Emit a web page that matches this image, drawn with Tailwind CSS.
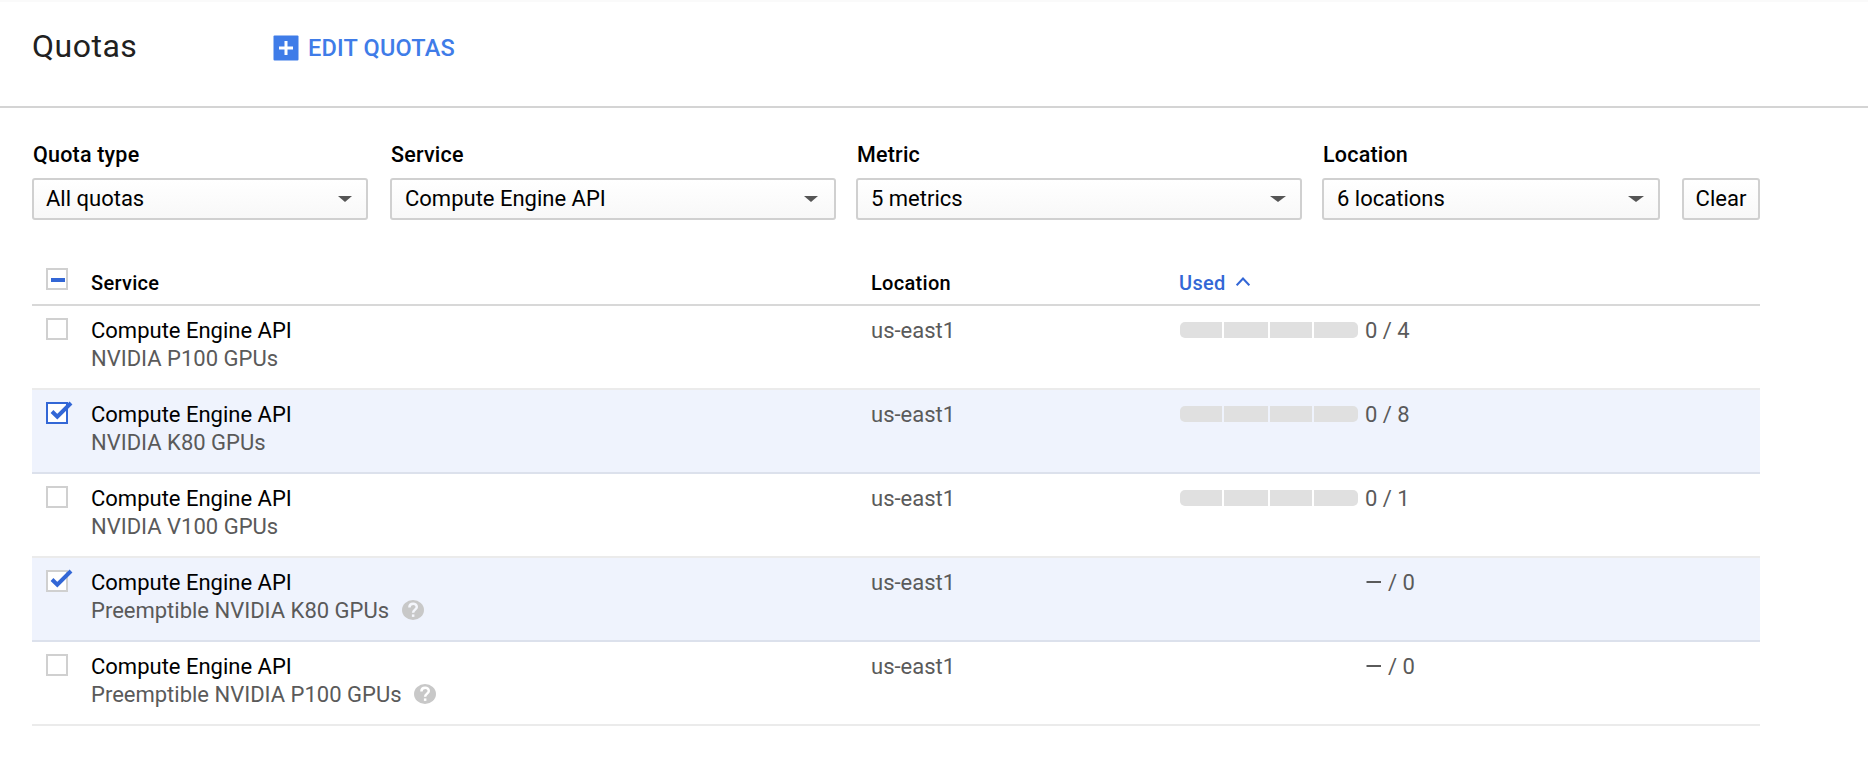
<!DOCTYPE html>
<html lang="en">
<head>
<meta charset="utf-8">
<title>Quotas</title>
<script src="https://cdn.jsdelivr.net/npm/@tailwindcss/browser@4"></script>
</head>
<body class="h-[758px] overflow-hidden bg-white font-[Roboto,sans-serif] text-[22px] leading-7 text-black">
<header class="flex h-[108px] items-start border-b-2 border-[#d4d4d4] pl-8 shadow-[inset_0_2px_0_#fafafa]">
  <h1 class="mt-[27px] w-[241px] text-[32px] leading-[38px] tracking-[0.5px] text-[#212121]">Quotas</h1>
  <button class="mt-[34px] flex items-center gap-[9px] text-[23.5px] font-medium leading-7 tracking-[0.2px] text-[#3f7ce8]">
    <svg class="size-[26px]" viewBox="0 0 26 26"><rect x=".5" y=".5" width="25" height="25" rx="1" fill="#3f7ce8"/><path d="M13 6v14M6 13h14" stroke="#fff" stroke-width="3"/></svg>
    <span>EDIT QUOTAS</span>
  </button>
</header>

<section class="flex items-end pl-8 pt-[33px]">
  <div class="mr-[22px] w-[336px]">
    <div class="mb-[9px] pl-px text-[21.5px] font-medium tracking-[0.2px]">Quota type</div>
    <div class="flex h-[42px] items-center justify-between rounded-[3px] border-2 border-[#d0d0d0] bg-linear-to-b from-white to-[#f8f8f8] pl-[12px] pr-[14px]"><span>All quotas</span><svg class="h-[6px] w-[14px]" viewBox="0 0 14 6"><path d="M0 0h14L7 6z" fill="#555"/></svg></div>
  </div>
  <div class="mr-[20px] w-[446px]">
    <div class="mb-[9px] pl-px text-[21.5px] font-medium tracking-[0.2px]">Service</div>
    <div class="flex h-[42px] items-center justify-between rounded-[3px] border-2 border-[#d0d0d0] bg-linear-to-b from-white to-[#f8f8f8] pl-[13px] pr-[16px]"><span>Compute Engine API</span><svg class="h-[6px] w-[14px]" viewBox="0 0 14 6"><path d="M0 0h14L7 6z" fill="#555"/></svg></div>
  </div>
  <div class="mr-[20px] w-[446px]">
    <div class="mb-[9px] pl-px text-[21.5px] font-medium tracking-[0.2px]">Metric</div>
    <div class="flex h-[42px] items-center justify-between rounded-[3px] border-2 border-[#d0d0d0] bg-linear-to-b from-white to-[#f8f8f8] pl-[13px] pr-[14px]"><span>5 metrics</span><svg class="h-[6px] w-[16px]" viewBox="0 0 16 6"><path d="M0 0h16L8 6z" fill="#555"/></svg></div>
  </div>
  <div class="mr-[22px] w-[338px]">
    <div class="mb-[9px] pl-px text-[21.5px] font-medium tracking-[0.2px]">Location</div>
    <div class="flex h-[42px] items-center justify-between rounded-[3px] border-2 border-[#d0d0d0] bg-linear-to-b from-white to-[#f8f8f8] pl-[13px] pr-[14px]"><span>6 locations</span><svg class="h-[6px] w-[16px]" viewBox="0 0 16 6"><path d="M0 0h16L8 6z" fill="#555"/></svg></div>
  </div>
  <button class="h-[42px] w-[78px] rounded-[3px] border-2 border-[#d0d0d0] bg-linear-to-b from-white to-[#f8f8f8] leading-7">Clear</button>
</section>

<main class="ml-8 mt-[34px] w-[1728px]">
  <div class="flex h-[52px] border-b-2 border-[#d8d8d8] pl-[14px] text-[20px] font-medium tracking-[0.3px]">
    <svg class="mr-[23px] mt-[14px] size-[22px]" viewBox="0 0 22 22"><rect x="1" y="1" width="20" height="20" fill="#fff" stroke="#d0d0d0" stroke-width="2"/><path d="M5 12h14" stroke="#3367d6" stroke-width="4"/></svg>
    <div class="mt-[15px] w-[780px]">Service</div>
    <div class="mt-[15px] w-[308px]">Location</div>
    <div class="mt-[15px] flex gap-[10px] text-[#3367d6]">Used<svg class="mt-[8px] h-[9px] w-[14px]" viewBox="0 0 14 9"><path d="M.7 8.3L7 1.5l6.3 6.8" fill="none" stroke="#3367d6" stroke-width="2"/></svg></div>
  </div>

  <div class="flex h-[84px] border-b-2 border-[#ebebeb] pl-[14px] text-[#5a5a5a]">
    <svg class="mr-[23px] mt-3 size-[22px]" viewBox="0 0 22 22"><rect x="1" y="1" width="20" height="20" fill="#fff" stroke="#d0d0d0" stroke-width="2"/></svg>
    <div class="mt-[11px] w-[780px]"><div class="text-black">Compute Engine API</div><div>NVIDIA P100 GPUs</div></div>
    <div class="mt-[11px] w-[309px]">us-east1</div>
    <div class="mr-[7px] mt-4 flex h-4 w-[178px] gap-[2px] overflow-hidden rounded-[5px]"><i class="w-[42px] bg-[#e0e0e0]"></i><i class="w-[44px] bg-[#e0e0e0]"></i><i class="w-[42px] bg-[#e0e0e0]"></i><i class="w-[44px] bg-[#e0e0e0]"></i></div>
    <div class="mt-[11px]">0 / 4</div>
  </div>

  <div class="flex h-[84px] border-b-2 border-[#dce1ec] bg-[#eff3fd] pl-[14px] text-[#5a5a5a]">
    <svg class="mr-[23px] mt-3 size-[22px] overflow-visible" viewBox="0 0 22 22"><rect x="1" y="1" width="20" height="20" fill="#fff" stroke="#3367d6" stroke-width="2"/><path d="M6 9.500l5.300 5.200L25 1" fill="none" stroke="#3367d6" stroke-width="4"/></svg>
    <div class="mt-[11px] w-[780px]"><div class="text-black">Compute Engine API</div><div>NVIDIA K80 GPUs</div></div>
    <div class="mt-[11px] w-[309px]">us-east1</div>
    <div class="mr-[7px] mt-4 flex h-4 w-[178px] gap-[2px] overflow-hidden rounded-[5px]"><i class="w-[42px] bg-[#e0e0e0]"></i><i class="w-[44px] bg-[#e0e0e0]"></i><i class="w-[42px] bg-[#e0e0e0]"></i><i class="w-[44px] bg-[#e0e0e0]"></i></div>
    <div class="mt-[11px]">0 / 8</div>
  </div>

  <div class="flex h-[84px] border-b-2 border-[#ebebeb] pl-[14px] text-[#5a5a5a]">
    <svg class="mr-[23px] mt-3 size-[22px]" viewBox="0 0 22 22"><rect x="1" y="1" width="20" height="20" fill="#fff" stroke="#d0d0d0" stroke-width="2"/></svg>
    <div class="mt-[11px] w-[780px]"><div class="text-black">Compute Engine API</div><div>NVIDIA V100 GPUs</div></div>
    <div class="mt-[11px] w-[309px]">us-east1</div>
    <div class="mr-[7px] mt-4 flex h-4 w-[178px] gap-[2px] overflow-hidden rounded-[5px]"><i class="w-[42px] bg-[#e0e0e0]"></i><i class="w-[44px] bg-[#e0e0e0]"></i><i class="w-[42px] bg-[#e0e0e0]"></i><i class="w-[44px] bg-[#e0e0e0]"></i></div>
    <div class="mt-[11px]">0 / 1</div>
  </div>

  <div class="flex h-[84px] border-b-2 border-[#dce1ec] bg-[#eff3fd] pl-[14px] text-[#5a5a5a]">
    <svg class="mr-[23px] mt-3 size-[22px] overflow-visible" viewBox="0 0 22 22"><rect x="1" y="1" width="20" height="20" fill="#fff" stroke="#d0d0d0" stroke-width="2"/><path d="M6 9.500l5.300 5.200L25 1" fill="none" stroke="#3367d6" stroke-width="4"/></svg>
    <div class="mt-[11px] w-[780px]"><div class="text-black">Compute Engine API</div><div class="flex items-center gap-[13px]">Preemptible NVIDIA K80 GPUs<svg class="mb-[2px] h-5 w-[22px]" viewBox="0 0 22 20"><ellipse cx="11" cy="10" rx="11" ry="10" fill="#c8c8c8"/><path d="M7.400 7.400C7.400 2.600 14.800 2.600 14.800 7c0 2.500-3.700 2.800-3.700 5.700" fill="none" stroke="#f4f6fc" stroke-width="2.500"/><rect x="9.900" y="14.400" width="2.500" height="2.500" fill="#f4f6fc"/></svg></div></div>
    <div class="mt-[11px] w-[494px]">us-east1</div>
    <div class="mt-[11px] flex items-start"><svg class="mr-[7px] mt-[12px] h-[2px] w-[16px]" viewBox="0 0 16 2"><path d="M1.500 1h14.500" stroke="#5a5a5a" stroke-width="2"/></svg>/ 0</div>
  </div>

  <div class="flex h-[84px] border-b-2 border-[#ebebeb] pl-[14px] text-[#5a5a5a]">
    <svg class="mr-[23px] mt-3 size-[22px]" viewBox="0 0 22 22"><rect x="1" y="1" width="20" height="20" fill="#fff" stroke="#d0d0d0" stroke-width="2"/></svg>
    <div class="mt-[11px] w-[780px]"><div class="text-black">Compute Engine API</div><div class="flex items-center gap-[12px]">Preemptible NVIDIA P100 GPUs<svg class="mb-[2px] h-5 w-[22px]" viewBox="0 0 22 20"><ellipse cx="11" cy="10" rx="11" ry="10" fill="#c8c8c8"/><path d="M7.400 7.400C7.400 2.600 14.800 2.600 14.800 7c0 2.500-3.700 2.800-3.700 5.700" fill="none" stroke="#fff" stroke-width="2.500"/><rect x="9.900" y="14.400" width="2.500" height="2.500" fill="#fff"/></svg></div></div>
    <div class="mt-[11px] w-[494px]">us-east1</div>
    <div class="mt-[11px] flex items-start"><svg class="mr-[7px] mt-[12px] h-[2px] w-[16px]" viewBox="0 0 16 2"><path d="M1.500 1h14.500" stroke="#5a5a5a" stroke-width="2"/></svg>/ 0</div>
  </div>
</main>
</body>
</html>
